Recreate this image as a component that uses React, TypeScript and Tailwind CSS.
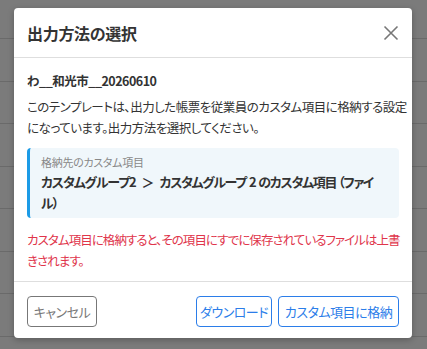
import React from "react";

export default function App() {
  const rows = [0, 1, 2, 3, 4, 5, 6, 7, 8];
  return (
    <div
      className="relative w-[427px] h-[349px] overflow-hidden bg-[#7b7b7b]"
      style={{ fontFamily: '"Noto Sans CJK JP", "Noto Sans", sans-serif', fontFeatureSettings: '"palt"' }}
    >
      <div className="flex flex-col pt-[38px]">
        {rows.map((r) => (
          <div key={r} className="h-[42.5px] shrink-0 border-t border-[#6a6a6a]" />
        ))}
      </div>

      <div className="absolute left-[14px] top-[8px] w-[398px] rounded-[4px] bg-white shadow-[0_2px_6px_rgba(0,0,0,0.25)] flex flex-col">
        <div className="h-[50px] flex items-center justify-between pl-[13px] pr-[12px] border-b border-[#dedede]">
          <div className="text-[16px] font-semibold text-[#333] leading-none tracking-[-0.3px]">出力方法の選択</div>
          <svg width="16" height="16" viewBox="0 0 16 16" className="mr-[1px]">
            <path d="M1.5 1.5 L14.5 14.5 M14.5 1.5 L1.5 14.5" stroke="#777" strokeWidth="1.6" fill="none" />
          </svg>
        </div>

        <div className="flex flex-col pt-[13px] pb-[10px] px-[13px]">
          <div className="text-[12.5px] leading-[20px] font-bold text-[#333] tracking-[-0.5px]">わ__和光市__20260610</div>
          <div className="mt-[5px] text-[12.5px] leading-[21px] text-[#333] tracking-[-0.5px] whitespace-nowrap">
            このテンプレートは、出力した帳票を従業員のカスタム項目に格納する設定
            <br />
            になっています。出力方法を選択してください。
          </div>
          <div className="mt-[10px] rounded-[4px] border-l-[3px] border-[#1c9be6] bg-[#f0f7fb] pl-[11px] pr-[11px] pt-[6px] pb-[5px]">
            <div className="text-[11px] leading-[16px] text-[#888] tracking-[-0.3px]">格納先のカスタム項目</div>
            <div className="mt-[1px] text-[13px] leading-[21px] font-bold text-[#333] tracking-[-1.1px] whitespace-nowrap">
              カスタムグループ2<span className="mx-[6px]">＞</span>
              <span className="tracking-[-1.3px]">
                カスタムグループ<span className="mx-[3px]">2</span>のカスタム項目<span className="ml-[2px]">（</span>ファイ
              </span>
              <br />
              ル）
            </div>
          </div>
          <div className="mt-[11px] text-[12.5px] leading-[21px] text-[#e0354b] tracking-[-0.95px] whitespace-nowrap">
            カスタム項目に格納すると、その項目にすでに保存されているファイルは上書
            <br />
            きされます。
          </div>
        </div>

        <div className="border-t border-[#dedede] flex items-center justify-between pl-[13px] pr-[13px] pt-[14px] pb-[11px]">
          <button className="h-[31px] w-[70px] rounded-[4px] border border-[#777] text-[13px] text-[#777] bg-white tracking-[-0.5px]">
            キャンセル
          </button>
          <div className="flex gap-[6px]">
            <button className="h-[31px] w-[76px] rounded-[4px] border border-[#2b7de9] text-[13px] text-[#2b7de9] bg-white tracking-[-0.5px]">
              ダウンロード
            </button>
            <button className="h-[31px] w-[121px] rounded-[4px] border border-[#2b7de9] text-[13px] text-[#2b7de9] bg-white tracking-[-0.5px]">
              カスタム項目に格納
            </button>
          </div>
        </div>
      </div>
    </div>
  );
}
